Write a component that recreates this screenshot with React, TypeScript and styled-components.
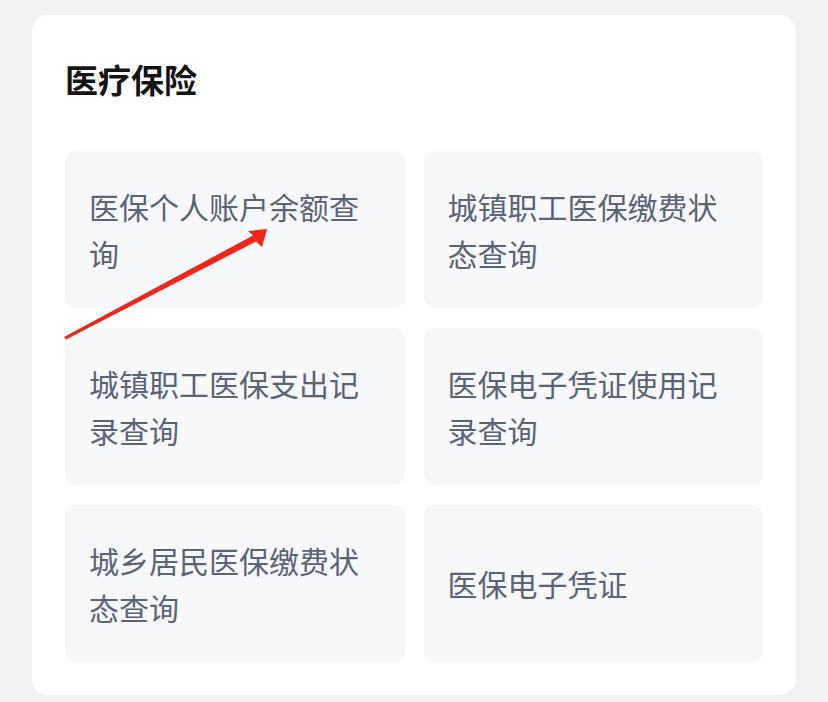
import styled, { createGlobalStyle } from "styled-components";

const GlobalStyle = createGlobalStyle`
  html, body {
    margin: 0;
    padding: 0;
    background: #f2f2f2;
  }
  body {
    font-family: "Noto Sans CJK SC", "Noto Sans", sans-serif;
  }
`;

const Page = styled.div`
  position: relative;
  width: 828px;
  height: 702px;
  padding: 15px 32px 0;
  box-sizing: border-box;
`;

const Card = styled.section`
  background: #ffffff;
  border-radius: 16px;
  padding: 44px 33px 33px;
  box-sizing: border-box;
`;

const Title = styled.h2`
  margin: 0 0 52px;
  font-size: 33px;
  line-height: 40px;
  font-weight: 700;
  color: #141414;
  letter-spacing: 0;
`;

const Grid = styled.div`
  display: grid;
  grid-template-columns: 1fr 1fr;
  column-gap: 19px;
  row-gap: 20px;
`;

const Tile = styled.div`
  height: 157px;
  box-sizing: border-box;
  padding: 0 24px;
  border-radius: 10px;
  background: #f7f8fa;
  display: flex;
  align-items: center;
`;

const TileText = styled.span`
  font-size: 30px;
  line-height: 47px;
  color: #5b6376;
  font-weight: 400;
`;

const Arrow = styled.svg`
  position: absolute;
  left: 0;
  top: 0;
  pointer-events: none;
`;

const items = [
  "医保个人账户余额查询",
  "城镇职工医保缴费状态查询",
  "城镇职工医保支出记录查询",
  "医保电子凭证使用记录查询",
  "城乡居民医保缴费状态查询",
  "医保电子凭证",
];

export default function App() {
  return (
    <>
      <GlobalStyle />
      <Page>
        <Card>
          <Title>医疗保险</Title>
          <Grid>
            {items.map((t) => (
              <Tile key={t}>
                <TileText>{t}</TileText>
              </Tile>
            ))}
          </Grid>
        </Card>
        <Arrow width="828" height="702" viewBox="0 0 828 702">
          <polygon
            points="64,337 253,235.5 248,231 267,229 262,247 256,241.5 66,339.5"
            fill="#f0261c"
          />
        </Arrow>
      </Page>
    </>
  );
}
